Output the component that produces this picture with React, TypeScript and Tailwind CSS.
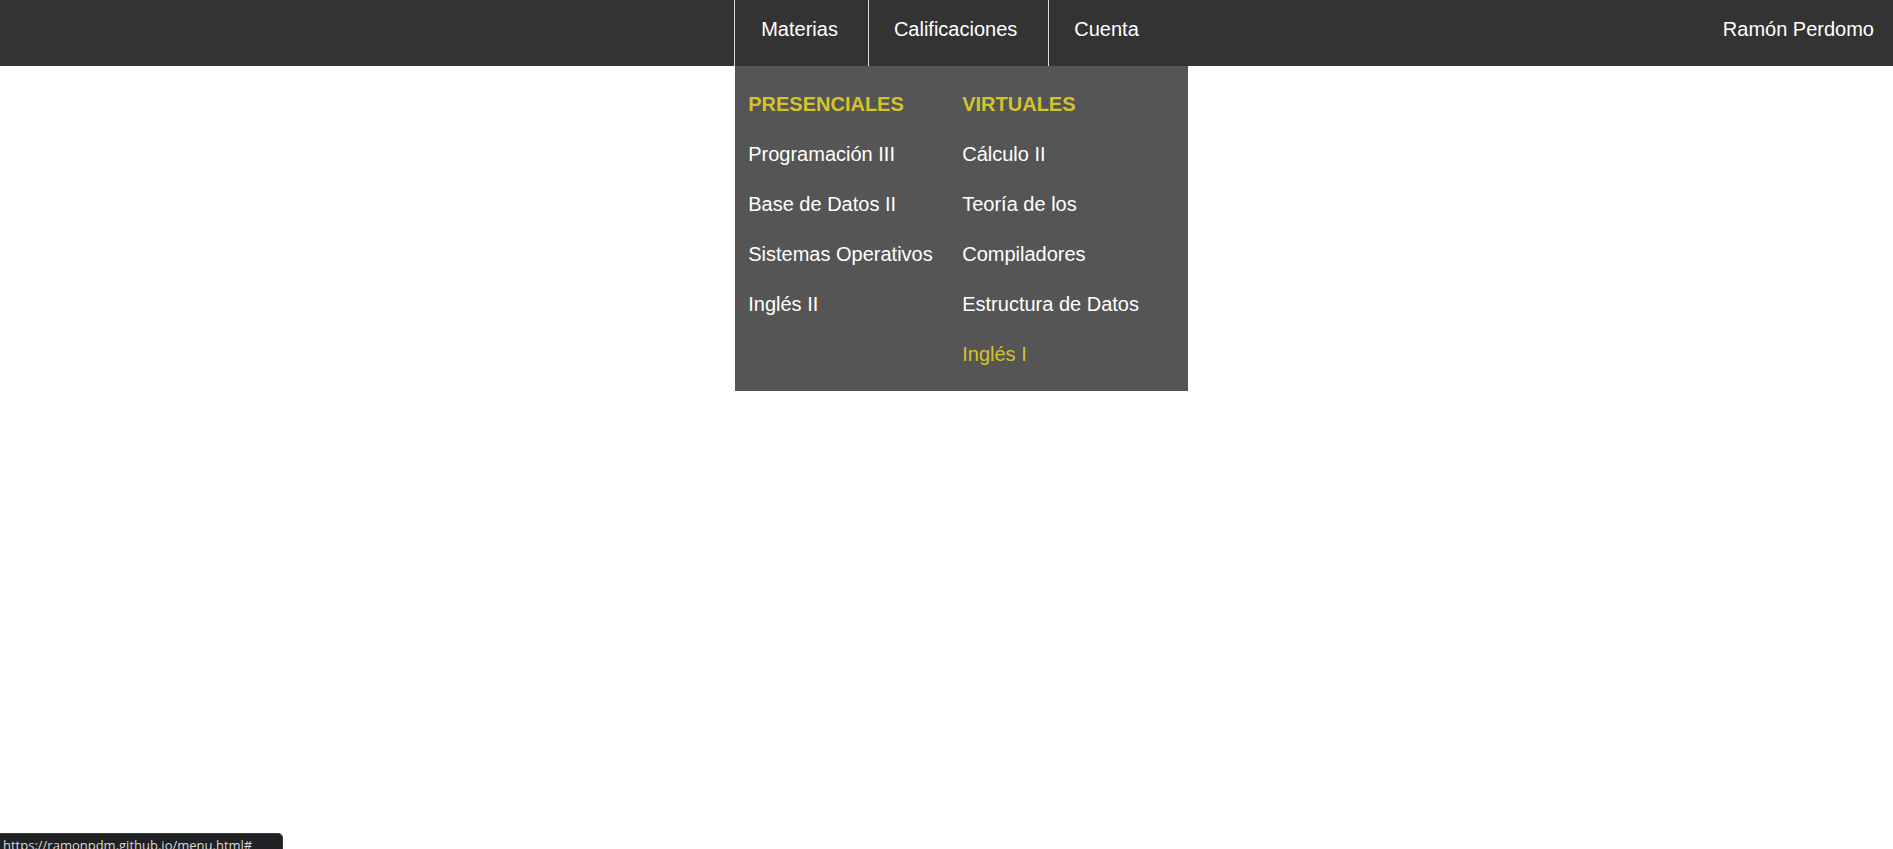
const presenciales = ['Programación III', 'Base de Datos II', 'Sistemas Operativos', 'Inglés II'];
const virtuales = ['Cálculo II', 'Teoría de los', 'Compiladores', 'Estructura de Datos', 'Inglés I'];

export default function App() {
  return (
    <div className="min-h-screen bg-white" style={{ fontFamily: '"Liberation Sans", Arial, sans-serif' }}>
      <header className="relative h-[66px] bg-[#333333] text-white text-[20px]">
        <nav className="flex justify-center h-full pl-[10px]">
          <ul className="flex h-full">
            <li className="relative h-full border-l border-[#dddddd]">
              <a href="#" className="block h-full pt-[17px] pl-[26px] pr-[30px] leading-6">Materias</a>
              <div className="absolute left-0 top-[66px] z-10 w-[453px] bg-[#555555] flex pt-[13px] pb-[12px]">
                <ul className="w-[214px] pl-[13px]">
                  <li className="h-[50px] leading-[50px] font-bold text-[#d3c42b]">PRESENCIALES</li>
                  {presenciales.map((m) => (
                    <li key={m} className="h-[50px] leading-[50px]">
                      <a href="#">{m}</a>
                    </li>
                  ))}
                </ul>
                <ul className="flex-1 pl-[13px]">
                  <li className="h-[50px] leading-[50px] font-bold text-[#d3c42b]">VIRTUALES</li>
                  {virtuales.map((m, i) => (
                    <li key={m} className={`h-[50px] leading-[50px] ${i === virtuales.length - 1 ? 'text-[#d3c42b]' : ''}`}>
                      <a href="#">{m}</a>
                    </li>
                  ))}
                </ul>
              </div>
            </li>
            <li className="h-full border-l border-[#dddddd]">
              <a href="#" className="block h-full pt-[17px] pl-[25px] pr-[31px] leading-6">Calificaciones</a>
            </li>
            <li className="h-full border-l border-[#dddddd]">
              <a href="#" className="block h-full pt-[17px] pl-[25px] pr-[30px] leading-6">Cuenta</a>
            </li>
          </ul>
        </nav>
        <div className="absolute right-[19px] top-[17px] leading-6">Ramón Perdomo</div>
      </header>

      <div className="fixed left-0 bottom-[-9px] h-[25px] w-[283px] overflow-hidden rounded-tr-[5px] bg-[#202124] border border-[#3c3c3c] border-l-0 pl-[3px] text-[13px] leading-[22px] text-[#d8d8d8]" style={{ fontFamily: '"Open Sans", "Noto Sans", sans-serif' }}>
        https://ramonpdm.github.io/menu.html#
      </div>
    </div>
  );
}
